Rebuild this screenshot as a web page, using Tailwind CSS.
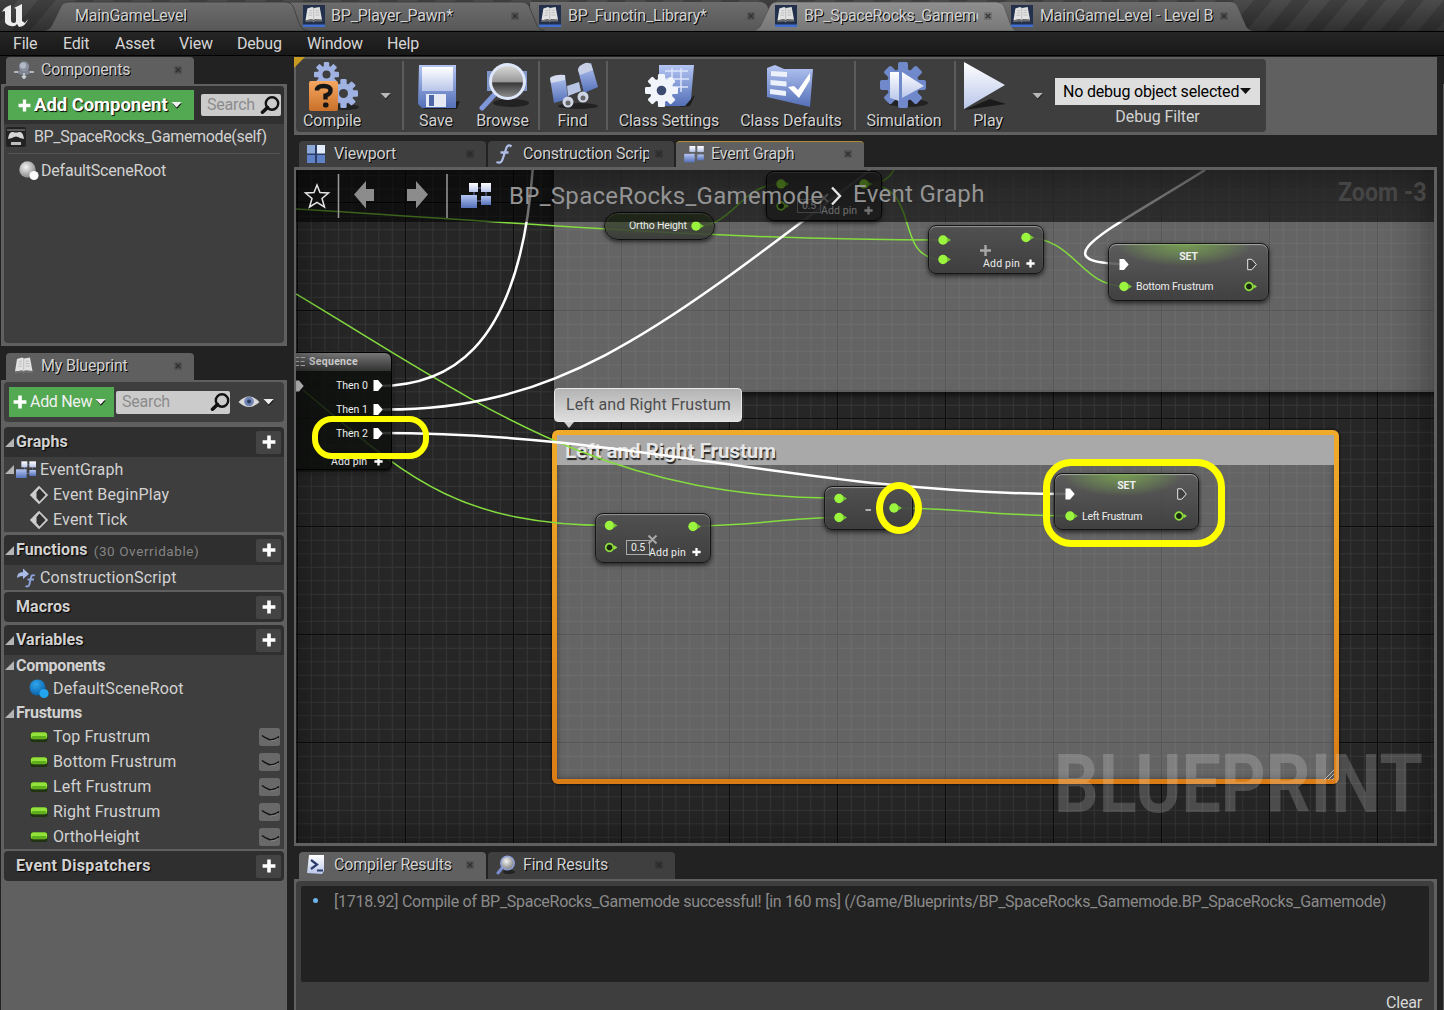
<!DOCTYPE html>
<html lang="en">
<head>
<meta charset="utf-8">
<title>Blueprint Editor</title>
<script src="https://cdn.jsdelivr.net/npm/@tailwindcss/browser@4"></script>
</head>
<body class="bg-[#222222]">
<svg class="absolute w-0 h-0">
  <defs>
    <linearGradient id="blue" x1="0" y1="0" x2="0" y2="1"><stop offset="0" stop-color="#b4c5f2"/><stop offset="1" stop-color="#5470b8"/></linearGradient>
    <linearGradient id="pale" x1="0" y1="0" x2="0" y2="1"><stop offset="0" stop-color="#ffffff"/><stop offset="1" stop-color="#b9c6ea"/></linearGradient>
    <linearGradient id="orange" x1="0" y1="0" x2="0" y2="1"><stop offset="0" stop-color="#f5a760"/><stop offset="1" stop-color="#c9702a"/></linearGradient>
    <radialGradient id="ball" cx=".4" cy=".35" r=".65"><stop offset="0" stop-color="#f4f4f4"/><stop offset="1" stop-color="#8a8a8a"/></radialGradient>
    <radialGradient id="blueball" cx=".4" cy=".3" r=".7"><stop offset="0" stop-color="#2fa6ee"/><stop offset="1" stop-color="#0a62a8"/></radialGradient>
    <linearGradient id="lens" x1="0" y1="0" x2="0" y2="1"><stop offset="0" stop-color="#d8d8d8"/><stop offset=".5" stop-color="#9a9a9a"/><stop offset=".55" stop-color="#3a3a3a"/><stop offset="1" stop-color="#8c8c8c"/></linearGradient>
    <linearGradient id="tab" x1="0" y1="0" x2="0" y2="1"><stop offset="0" stop-color="#6d6d6d"/><stop offset="1" stop-color="#575757"/></linearGradient>
    <linearGradient id="tabOn" x1="0" y1="0" x2="0" y2="1"><stop offset="0" stop-color="#8f8f8f"/><stop offset="1" stop-color="#787878"/></linearGradient>
    <pattern id="stripes" width="38" height="40" patternUnits="userSpaceOnUse" patternTransform="skewX(-40)"><rect width="18" height="40" fill="#000" opacity=".16"/></pattern>
    <linearGradient id="bar" x1="0" y1="0" x2="0" y2="1"><stop offset="0" stop-color="#4b4b4b"/><stop offset="1" stop-color="#303030"/></linearGradient>
  </defs>
  <symbol id="book" viewBox="0 0 20 18"><path d="M3 2 L8 0.5 L10 1.5 L16 0.5 L18.500 14 L11 13.500 L9.500 14.500 L8 13.500 L1 14.500Z" fill="#e2e2e2"/><path d="M1 14.500 L8 13.500 L9.500 14.800 L11 13.500 L18.500 14 L18.800 16 L11 15.800 L9.500 17 L8 15.800 L0.800 16.500Z" fill="#6f6f6f"/><path d="M9.700 1.500V14M5 4.500l3-.5M4.600 7l3.400-.5M4.200 9.500l3.800-.5M11.500 4l3.500.2M11.500 6.500l4 .2M11.500 9l4.400.2" stroke="#b4b4b4" stroke-width=".8" fill="none"/></symbol>
  <symbol id="bookbox" viewBox="0 0 22 22"><rect width="22" height="22" fill="#23304c"/><rect y="19.500" width="22" height="2.500" fill="#3f6fd0"/><use href="#book" x="1.500" y="1.500" width="19" height="17"/></symbol>
  <symbol id="x" viewBox="0 0 8 8"><rect width="8" height="8" rx="1" fill="#000" opacity=".13"/><path d="M1.700 1.700L6.300 6.300M6.300 1.700L1.700 6.300" stroke="#262626" stroke-width="1.500" opacity=".75"/></symbol>
  <symbol id="mag" viewBox="0 0 20 18"><circle cx="12" cy="7.500" r="6.200" fill="none" stroke="#111" stroke-width="2.400"/><path d="M7.500 11.500L2.500 16.200" stroke="#111" stroke-width="3.600" stroke-linecap="round"/></symbol>
  <symbol id="down" viewBox="0 0 12 8"><path d="M1.500 2.500L6 7.800L10.800 2.500" fill="#111"/><path d="M.5 1H10.700L5.600 6.600Z" fill="#eee"/></symbol>
  <symbol id="downGrey" viewBox="0 0 12 8"><path d="M1.500 2.500L6 7.800L10.800 2.500" fill="#222"/><path d="M.5 1H10.700L5.600 6.600Z" fill="#b8b8b8"/></symbol>
  <symbol id="plus" viewBox="0 0 14 14"><path d="M5.200 .6h3.600v4.600h4.600v3.600H8.800v4.600H5.200V8.800H.6V5.200h4.600z" fill="#fff"/></symbol>
  <symbol id="tri" viewBox="0 0 9 9"><path d="M9 0V9H0Z" fill="#b4b4b4"/></symbol>
  <symbol id="graph" viewBox="0 0 30 26"><path d="M13 5H25V18H6M13 5v13" fill="none" stroke="#6a7ba8" stroke-width="1"/><rect x="8" y="0" width="9" height="9" fill="url(#pale)"/><rect x="20" y="0" width="10" height="9" fill="url(#pale)"/><rect x="0" y="12" width="16" height="13" fill="url(#blue)"/><rect x="20" y="13" width="10" height="9" fill="url(#blue)"/></symbol>
  <symbol id="event" viewBox="0 0 20 20"><path d="M10 .8L19.200 10L10 19.200L.8 10Z" fill="#cdcdcd"/><path d="M7.500 7L10.500 3.600L16.600 10L10.500 16.400L7.500 13Z" fill="#303030"/></symbol>
  <symbol id="pill" viewBox="0 0 18 12"><rect x=".3" y="1" width="17.400" height="10" rx="3" fill="#1f3310"/><rect x=".8" y="1.300" width="16.400" height="7" rx="2.500" fill="#93e23c"/><rect x="1.500" y="5" width="15" height="3" rx="1.500" fill="#5fae1c"/></symbol>
  <symbol id="closedeye" viewBox="0 0 21 18"><rect width="21" height="18" rx="2.500" fill="#696969"/><path d="M3 7.500Q6 10 11.500 12Q17 11.500 20 8.500" fill="none" stroke="#111" stroke-width="1.400"/><path d="M11 13Q17 12.700 19 10.300" fill="none" stroke="#999" stroke-width=".7"/></symbol>
  <symbol id="gear" viewBox="-12 -12 24 24"><circle r="8.500"/><rect x="-2.600" y="-12" width="5.200" height="24" rx="1"/><rect x="-2.600" y="-12" width="5.200" height="24" rx="1" transform="rotate(45)"/><rect x="-2.600" y="-12" width="5.200" height="24" rx="1" transform="rotate(90)"/><rect x="-2.600" y="-12" width="5.200" height="24" rx="1" transform="rotate(135)"/></symbol>
  <symbol id="pin" viewBox="0 0 14 10" overflow="visible"><circle cx="5" cy="5" r="4.700" fill="#9bf53f"/><path d="M9 2.500L13 5L9 7.500Z" fill="#78c832"/></symbol>
  <symbol id="pinO" viewBox="0 0 14 10" overflow="visible"><circle cx="5" cy="5" r="3.800" fill="#1c2a12" stroke="#8fe03c" stroke-width="1.700"/><path d="M9.500 2.800L13 5L9.500 7.200Z" fill="#8fe03c"/></symbol>
  <symbol id="exec" viewBox="0 0 10 12" overflow="visible"><path d="M.5 .5H5L9.700 6L5 11.500H.5Z" fill="#fff"/></symbol>
  <symbol id="execO" viewBox="0 0 10 12" overflow="visible"><path d="M.7 .8H4.800L9.300 6L4.800 11.200H.7Z" fill="#222" fill-opacity=".4" stroke="#e8e8e8" stroke-width="1"/></symbol>
</svg>

<div class="relative w-[1444px] h-[1010px] overflow-hidden bg-[#222222] flex flex-col font-[Roboto,sans-serif] text-[16px] leading-5 tracking-[-0.2px] text-[#d2d2d2] whitespace-nowrap">

  <!-- Window tabs -->
  <header class="relative h-[31px] shrink-0 flex items-center text-shadow-[1px_1px_0_#000]">
    <svg class="absolute inset-0" width="1444" height="31">
      <rect width="1444" height="31" fill="url(#bar)"/><rect width="1444" height="31" fill="url(#stripes)"/>
      <path d="M1005 31L1000 2H1230Q1236 2 1238 8L1245 24Q1247 30 1253 31Z" fill="url(#tab)"/>
      <path d="M530 31V2H760Q766 2 768 8L778 31Z" fill="url(#tab)"/>
      <path d="M290 31V2H522Q527 2 529 6L536 23Q538 30 545 31Z" fill="url(#tab)" stroke="#3a3a3a" stroke-width=".8"/>
      <path d="M45 31Q51 29 53 23L61 6Q63 2 68 2H285Q291 2 293 6L299 23Q301 30 308 31Z" fill="url(#tab)" stroke="#3a3a3a" stroke-width=".8"/>
      <path d="M753 31Q760 29 762 23L770 6Q772 2 777 2H996Q1002 2 1004 6L1010 23Q1012 30 1018 31Z" fill="url(#tabOn)" stroke="#4a4a4a" stroke-width=".6"/>
      <path d="M2 12Q4 7 11 5V20Q11 23 14 23Q16 23 16 21V9Q15 8 14 8Q18 6 22 4V21L25 23L28 19Q26 26 19 27L17 24Q15 27 11 26Q6 25 5 22V12Q5 10 2 12Z" fill="#eee"/>
    </svg>
    <div class="relative w-[225px] ml-[75px]">MainGameLevel</div>
    <div class="relative w-[236px] flex items-center"><svg class="ml-[3px] w-[22px] h-[22px]"><use href="#bookbox"/></svg><span class="ml-[6px] w-[180px]">BP_Player_Pawn*</span><svg class="w-2 h-2"><use href="#x"/></svg></div>
    <div class="relative w-[237px] flex items-center"><svg class="ml-[3px] w-[22px] h-[22px]"><use href="#bookbox"/></svg><span class="ml-[7px] w-[179px]">BP_Functin_Library*</span><svg class="w-2 h-2"><use href="#x"/></svg></div>
    <div class="relative w-[235px] flex items-center"><svg class="ml-[2px] w-[22px] h-[22px]"><use href="#bookbox"/></svg><span class="ml-[7px] w-[174px] mr-[6px] overflow-hidden tracking-[-0.35px]">BP_SpaceRocks_Gamemode</span><svg class="w-2 h-2"><use href="#x"/></svg></div>
    <div class="relative w-[237px] flex items-center"><svg class="ml-[3px] w-[22px] h-[22px]"><use href="#bookbox"/></svg><span class="ml-[7px] w-[174px] mr-[6px] overflow-hidden">MainGameLevel - Level Blueprint</span><svg class="w-2 h-2"><use href="#x"/></svg></div>
  </header>

  <!-- Menu -->
  <nav class="h-[25px] shrink-0 border-y border-black bg-linear-to-b from-[#262626] to-[#181818] flex items-center pl-[13px] text-[#d6d6d6]">
    <span class="w-[50px]">File</span><span class="w-[52px]">Edit</span><span class="w-[64px]">Asset</span><span class="w-[58px]">View</span><span class="w-[70px]">Debug</span><span class="w-[80px]">Window</span><span>Help</span>
  </nav>

  <div class="flex flex-1 min-h-0">
    <!-- Left column -->
    <aside class="w-[287px] pl-px pt-px shrink-0 flex flex-col">
      <div class="ml-[5px] w-[188px] h-[27px] pb-0.5 shrink-0 rounded-t-sm bg-[#5f5f5f] flex items-center text-shadow-[1px_1px_0_#000]">
        <svg class="ml-2 w-[20px] h-[18px]" viewBox="0 0 20 18"><path d="M1 11L10 7.500L19 11L10 15Z" fill="#7d8490"/><circle cx="10" cy="5.500" r="5" fill="#8b93a2"/><circle cx="9" cy="4.500" r="3" fill="#b3bac6"/><path d="M0 11h4M16 11h4M10 12v5M8 15l2 2.500L12 15" stroke="#c9cdd5" stroke-width="1.600"/></svg>
        <span class="ml-[7px] w-[133px]">Components</span><svg class="w-2 h-2"><use href="#x"/></svg>
      </div>
      <section class="h-[262px] shrink-0 bg-[#606060] pt-[2px] px-[3px] pb-[3px]">
        <div class="h-full rounded bg-[#3e3e3e] overflow-hidden">
          <div class="h-[38px] bg-[#303030] flex items-center pl-1">
            <button class="w-[186px] h-[30px] bg-[#53a951] flex items-center text-white font-bold text-[18.500px] tracking-[-0.05px] text-shadow-[1px_1px_1px_#000]">
              <svg class="ml-[10px] w-[13px] h-[13px]"><use href="#plus"/></svg><span class="ml-[3px] w-[137px] text-left">Add Component</span><svg class="w-[12px] h-[8px]"><use href="#down"/></svg>
            </button>
            <div class="ml-[7px] w-[80px] h-[22px] rounded-xs bg-[#cbcbcb] text-[#8b8b8b] flex items-center"><span class="ml-[6px] w-[53px]">Search</span><svg class="w-[20px] h-[18px]"><use href="#mag"/></svg></div>
          </div>
          <div class="h-[25px] flex items-center pl-[2px]">
            <svg class="w-[20px] h-[20px]" viewBox="0 0 20 20"><rect width="20" height="20" rx="2" fill="#222"/><path d="M1 3H19" stroke="#8f8f8f"/><path d="M2 12Q3 4 7 5Q10 6 13 5Q17 4 18 12L14 11Q10 8 6 11Z" fill="#d6d6d6"/><path d="M5 15h10v3H5z" fill="#bdbdbd"/></svg>
            <span class="ml-[8px] tracking-[-0.35px]">BP_SpaceRocks_Gamemode(self)</span>
          </div>
          <div class="mx-1 mt-1 h-px bg-[#555]"></div>
          <div class="h-[33px] flex items-center pl-[15px]"><svg class="w-[20px] h-[20px]" viewBox="0 0 20 20"><circle cx="8.500" cy="8.500" r="8.200" fill="url(#ball)"/><circle cx="15" cy="14.500" r="4.600" fill="#fafafa"/></svg><span class="ml-[2px]">DefaultSceneRoot</span></div>
        </div>
      </section>

      <div class="mt-[7px] ml-[5px] w-[188px] h-[27px] pb-0.5 shrink-0 rounded-t-sm bg-[#5f5f5f] flex items-center text-shadow-[1px_1px_0_#000]">
        <svg class="ml-2 w-[20px] h-[18px]"><use href="#book"/></svg><span class="ml-[7px] w-[133px]">My Blueprint</span><svg class="w-2 h-2"><use href="#x"/></svg>
      </div>
      <section class="flex-1 bg-[#606060] pt-[2px] px-[3px] flex flex-col">
        <div class="h-[40px] rounded bg-[#3e3e3e] flex items-center pl-[5px]">
          <button class="w-[105px] h-[30px] bg-[#53a951] flex items-center text-[#f0f0f0] tracking-[-0.3px]"><svg class="ml-1 w-[14px] h-[14px]"><use href="#plus"/></svg><span class="ml-[3px] w-[65px] text-left">Add New</span><svg class="w-[12px] h-[8px]"><use href="#down"/></svg></button>
          <div class="ml-[2px] w-[114px] h-[23px] rounded-xs bg-[#cbcbcb] text-[#8b8b8b] flex items-center"><span class="ml-[6px] w-[88px]">Search</span><svg class="w-[20px] h-[18px]"><use href="#mag"/></svg></div>
          <svg class="ml-2 w-[22px] h-[14px]" viewBox="0 0 22 14"><path d="M.5 7Q11-4 21.500 7Q11 17 .5 7Z" fill="#dadada"/><circle cx="11" cy="6.500" r="4.800" fill="#7186b5"/><circle cx="11" cy="6.500" r="2" fill="#2e3c60"/></svg>
          <svg class="ml-[3px] w-[12px] h-[8px]"><use href="#down"/></svg>
        </div>

        <h2 class="mt-[5px] h-[30px] rounded-t bg-[#2f2f2f] flex items-center pl-px font-bold tracking-[0.1px] text-shadow-[1px_1px_1px_#000]"><svg class="w-[9px] h-[9px]"><use href="#tri"/></svg><span class="ml-[2px] flex-1">Graphs</span><span class="w-[25px] h-[23px] rounded-xs bg-[#444] mr-[3px] grid place-items-center"><svg class="w-[14px] h-[14px]"><use href="#plus"/></svg></span></h2>
        <div class="h-[75px] bg-[#3e3e3e] tracking-[0.2px]">
          <div class="h-[25px] flex items-center pl-px"><svg class="w-[9px] h-[9px]"><use href="#tri"/></svg><svg class="ml-[2px] w-[20px] h-[18px]"><use href="#graph"/></svg><span class="ml-1">EventGraph</span></div>
          <div class="h-[25px] flex items-center pl-[25px]"><svg class="w-[20px] h-[20px]"><use href="#event"/></svg><span class="ml-1">Event BeginPlay</span></div>
          <div class="h-[25px] flex items-center pl-[25px]"><svg class="w-[20px] h-[20px]"><use href="#event"/></svg><span class="ml-1">Event Tick</span></div>
        </div>
        <h2 class="mt-[3px] h-[30px] rounded-t bg-[#2f2f2f] flex items-center pl-px font-bold tracking-[0.1px] text-shadow-[1px_1px_1px_#000]"><svg class="w-[9px] h-[9px]"><use href="#tri"/></svg><span class="ml-[2px]">Functions</span><span class="ml-[6px] mt-0.5 flex-1 font-normal text-[13.500px] tracking-[0.6px] text-[#848484] text-shadow-none">(30 Overridable)</span><span class="w-[25px] h-[23px] rounded-xs bg-[#444] mr-[3px] grid place-items-center"><svg class="w-[14px] h-[14px]"><use href="#plus"/></svg></span></h2>
        <div class="h-[25px] bg-[#3e3e3e] flex items-center pl-[12px] tracking-[0.2px]"><svg class="w-[20px] h-[20px]" viewBox="0 0 20 20"><path d="M1 10Q1 4 7 4V0.500L13 6L7 11V8Q3 8 1 10Z" fill="#a9bbe6"/><path d="M19 7.500Q15.500 6 14.800 10L13.500 16Q12.800 19.500 9.500 18M11.500 11.500H18" fill="none" stroke="#8ba1d6" stroke-width="1.900"/></svg><span class="ml-1">ConstructionScript</span></div>
        <h2 class="mt-[2px] h-[30px] rounded bg-[#2f2f2f] flex items-center pl-[12px] font-bold tracking-[0.1px] text-shadow-[1px_1px_1px_#000]"><span class="flex-1">Macros</span><span class="w-[25px] h-[23px] rounded-xs bg-[#444] mr-[3px] grid place-items-center"><svg class="w-[14px] h-[14px]"><use href="#plus"/></svg></span></h2>
        <h2 class="mt-[3px] h-[30px] rounded-t bg-[#2f2f2f] flex items-center pl-px font-bold text-shadow-[1px_1px_1px_#000]"><svg class="w-[9px] h-[9px]"><use href="#tri"/></svg><span class="ml-[2px] flex-1 tracking-[0]">Variables</span><span class="w-[25px] h-[23px] rounded-xs bg-[#444] mr-[3px] grid place-items-center"><svg class="w-[14px] h-[14px]"><use href="#plus"/></svg></span></h2>
        <div class="h-[194px] bg-[#3e3e3e] tracking-[0.15px]">
          <div class="h-[21px] flex items-center pl-px font-bold tracking-[-0.25px]"><svg class="w-[9px] h-[9px]"><use href="#tri"/></svg><span class="ml-[2px]">Components</span></div>
          <div class="h-[26px] flex items-center pl-[25px]"><svg class="w-[20px] h-[20px]" viewBox="0 0 20 20"><circle cx="8.500" cy="8.500" r="8" fill="url(#blueball)"/><circle cx="15" cy="14.500" r="4.600" fill="#22a4ee"/></svg><span class="ml-1">DefaultSceneRoot</span></div>
          <div class="h-[22px] flex items-center pl-px font-bold tracking-[-0.25px]"><svg class="w-[9px] h-[9px]"><use href="#tri"/></svg><span class="ml-[2px]">Frustums</span></div>
          <div class="h-[25px] flex items-center pl-[26px] pr-1"><svg class="w-[18px] h-[12px]"><use href="#pill"/></svg><span class="ml-[5px] flex-1">Top Frustrum</span><svg class="w-[21px] h-[18px]"><use href="#closedeye"/></svg></div>
          <div class="h-[25px] flex items-center pl-[26px] pr-1"><svg class="w-[18px] h-[12px]"><use href="#pill"/></svg><span class="ml-[5px] flex-1">Bottom Frustrum</span><svg class="w-[21px] h-[18px]"><use href="#closedeye"/></svg></div>
          <div class="h-[25px] flex items-center pl-[26px] pr-1"><svg class="w-[18px] h-[12px]"><use href="#pill"/></svg><span class="ml-[5px] flex-1">Left Frustrum</span><svg class="w-[21px] h-[18px]"><use href="#closedeye"/></svg></div>
          <div class="h-[25px] flex items-center pl-[26px] pr-1"><svg class="w-[18px] h-[12px]"><use href="#pill"/></svg><span class="ml-[5px] flex-1">Right Frustrum</span><svg class="w-[21px] h-[18px]"><use href="#closedeye"/></svg></div>
          <div class="h-[25px] flex items-center pl-[26px] pr-1"><svg class="w-[18px] h-[12px]"><use href="#pill"/></svg><span class="ml-[5px] flex-1 tracking-[0]">OrthoHeight</span><svg class="w-[21px] h-[18px]"><use href="#closedeye"/></svg></div>
        </div>
        <h2 class="mt-[2px] h-[30px] rounded bg-[#2f2f2f] flex items-center pl-[12px] font-bold tracking-[0.3px] text-shadow-[1px_1px_1px_#000]"><span class="flex-1">Event Dispatchers</span><span class="w-[25px] h-[23px] rounded-xs bg-[#444] mr-[3px] grid place-items-center"><svg class="w-[14px] h-[14px]"><use href="#plus"/></svg></span></h2>
      </section>
    </aside>

    <!-- Main column -->
    <main class="ml-[7px] w-[1143px] pt-px shrink-0 flex flex-col">
      <div class="relative h-[78px] shrink-0 bg-[#606060] pt-[2px] pl-[2px]">
        <div class="w-[970px] h-[73px] rounded bg-[#3e3e3e] flex tracking-[-0.1px] text-shadow-[1px_1px_0_#000]">
          <div class="w-[72px] flex flex-col items-center pt-[2px]">
            <svg class="w-[60px] h-[50px]" viewBox="302 61 60 50"><ellipse cx="345" cy="107" rx="14" ry="3" fill="#222"/><g fill="#9fb2e2"><use href="#gear" x="314" y="62" width="25" height="25"/><use href="#gear" x="329" y="79" width="29" height="29"/></g><circle cx="326.500" cy="74.500" r="4" fill="#3e3e3e"/><circle cx="343.500" cy="93.500" r="4.500" fill="#3e3e3e"/><rect x="309" y="81" width="29" height="30" rx="2" fill="url(#orange)"/><path d="M317 90.500Q317 86 323.500 86Q330.500 86 330.500 90.500Q330.500 94 325.500 95.500V99.500" fill="none" stroke="#161616" stroke-width="4.400"/><rect x="323" y="102.500" width="5.500" height="5" rx="2" fill="#161616"/></svg>
            <span>Compile</span>
          </div>
          <div class="w-[34px] pt-[33px] pl-[12px]"><svg class="w-[12px] h-[8px]"><use href="#downGrey"/></svg></div>
          <div class="w-[2px] my-[2px] bg-[#5c5c5c]"></div>
          <div class="w-[64px] flex flex-col items-center pt-[2px]">
            <svg class="w-[50px] h-[50px]" viewBox="411 61 50 50"><path d="M420 106L460 101L457 109H424Z" fill="#1d1d1d"/><path d="M419 65H456V108H422L418 104Z" fill="url(#blue)"/><rect x="422" y="67" width="31" height="24" fill="url(#pale)"/><path d="M426 94h20v13h-20z" fill="#e6eaf5"/><path d="M429 95h5v11h-5z" fill="#5068a8"/></svg>
            <span>Save</span>
          </div>
          <div class="w-[70px] pr-px flex flex-col items-center pt-[2px]">
            <svg class="w-[56px] h-[50px]" viewBox="474 61 56 50"><ellipse cx="510" cy="103" rx="18" ry="4" fill="#222"/><path d="M493 95L481 108" stroke="#7f97d8" stroke-width="5" stroke-linecap="round"/><path d="M486 71h40v20h-40z" fill="#8196c8"/><circle cx="506.500" cy="81.500" r="18.500" fill="#dfe7fa"/><circle cx="506.500" cy="81.500" r="15.500" fill="url(#lens)"/></svg>
            <span>Browse</span>
          </div>
          <div class="w-[2px] my-[2px] bg-[#5c5c5c]"></div>
          <div class="w-[66px] pr-px flex flex-col items-center pt-[2px]">
            <svg class="w-[54px] h-[50px]" viewBox="545 61 54 50"><ellipse cx="577" cy="106" rx="20" ry="3" fill="#222"/><path d="M577 70L590 63L597 87L583 93Z" fill="url(#blue)"/><path d="M577 70Q577 66 582 64Q588 61 590 65L592 70L579 75Z" fill="#c7cfe5"/><path d="M549 78L564 75L567 99L553 103Z" fill="url(#blue)"/><path d="M549 78Q554 74 564 75V80L550 83Z" fill="#d4dbee"/><path d="M566 86L578 82L580 91L567 96Z" fill="#b9c5e4"/><circle cx="567" cy="102" r="5.500" fill="#cfd5e5"/><circle cx="582" cy="97" r="5.500" fill="#cfd5e5"/><circle cx="567" cy="103" r="2.500" fill="#666"/><circle cx="582" cy="98" r="2.500" fill="#666"/></svg>
            <span>Find</span>
          </div>
          <div class="w-[2px] my-[2px] bg-[#5c5c5c]"></div>
          <div class="w-[122px] flex flex-col items-center pt-[2px]">
            <svg class="w-[60px] h-[50px]" viewBox="639 61 60 50"><path d="M680 107L695 95L690 106Z" fill="#1d1d1d"/><path d="M659 65H694L691 99L685 106H659Z" fill="url(#blue)"/><path d="M665 71h23M664 79h25M664 87h24M672 68v24M681 68v24" stroke="#dce5fb" stroke-width="1.500"/><g fill="#f1f4fb"><use href="#gear" x="645" y="74" width="33" height="33"/></g><circle cx="661.500" cy="90.500" r="4.800" fill="#3c4a70"/></svg>
            <span>Class Settings</span>
          </div>
          <div class="w-[124px] pr-[2px] flex flex-col items-center pt-[2px]">
            <svg class="w-[60px] h-[50px]" viewBox="762 61 60 50"><path d="M768 68L776 65L785 69H814L811 107L768 97Z" fill="url(#blue)"/><path d="M772 71l16 1v5l-16-1zM771.500 80l16 1.500v5l-16-1.500zM771 89l16 2v5l-16-2z" fill="#edf1fb"/><path d="M789 87L795 86L799 90L811 73L811 80L800 98Z" fill="#fff"/></svg>
            <span>Class Defaults</span>
          </div>
          <div class="w-[2px] my-[2px] bg-[#5c5c5c]"></div>
          <div class="w-[98px] pr-[2px] flex flex-col items-center pt-[2px]">
            <svg class="w-[60px] h-[50px]" viewBox="874 61 60 50"><ellipse cx="908" cy="103" rx="20" ry="4" fill="#222"/><g fill="#7089ca"><use href="#gear" x="880" y="62" width="46" height="46"/></g><path d="M890 72h9v29l-9-3z" fill="url(#pale)"/><path d="M902 72L924 86L902 98Z" fill="url(#pale)"/></svg>
            <span>Simulation</span>
          </div>
          <div class="w-[2px] my-[2px] bg-[#5c5c5c]"></div>
          <div class="w-[64px] flex flex-col items-center pt-[2px]">
            <svg class="w-[60px] h-[50px]" viewBox="958 61 60 50"><path d="M964 110L1006 104L990 99Z" fill="#1a1a1a"/><path d="M964 62L1005 85L964 109Z" fill="url(#pale)"/></svg>
            <span>Play</span>
          </div>
          <div class="w-[35px] pt-[33px] pl-[12px]"><svg class="w-[12px] h-[8px]"><use href="#downGrey"/></svg></div>
          <div class="w-[205px] pt-[19px] flex flex-col text-shadow-none">
            <div class="h-[27px] bg-[#dedede] text-black flex items-center pl-2"><span class="w-[177px] tracking-[-0.2px]">No debug object selected</span><svg class="w-[11px] h-[7px]" viewBox="0 0 11 7"><path d="M0 0H11L5.500 6Z" fill="#111"/></svg></div>
            <span class="mt-[2px] text-center">Debug Filter</span>
          </div>
        </div>
        <div class="absolute left-0 top-0 w-[11px] h-[11px] bg-[#c99a22] [clip-path:polygon(0_0,100%_0,0_100%)]"></div>
      </div>

      <!-- Document tabs -->
      <div class="mt-[6px] h-[26px] shrink-0 flex gap-[2px] pl-[5px] text-shadow-[1px_1px_0_#000]">
        <div class="w-[187px] rounded-t-sm bg-[#3f3f3f] flex items-center"><svg class="ml-2 w-[18px] h-[18px]" viewBox="0 0 18 18"><rect width="18" height="18" fill="#2b3d66"/><rect width="8" height="8.500" fill="#8da9d8"/><rect x="10" width="8" height="8.500" fill="#e3ecfa"/><rect y="10" width="8" height="8" fill="#5f82c6"/><rect x="10" y="10" width="8" height="8" fill="#5f82c6"/></svg><span class="ml-[9px] w-[132px]">Viewport</span><svg class="w-2 h-2"><use href="#x"/></svg></div>
        <div class="w-[186px] rounded-t-sm bg-[#3f3f3f] flex items-center"><svg class="ml-[7px] w-[18px] h-[20px]" viewBox="0 0 18 20"><path d="M16.500 2.500Q12.500-.5 11 5L7.500 15.500Q6 20 1.500 18M5.500 8.500H13.500" fill="none" stroke="#aebde8" stroke-width="2.300"/></svg><span class="ml-[10px] w-[126px] mr-[6px] overflow-hidden">Construction Script</span><svg class="w-2 h-2"><use href="#x"/></svg></div>
        <div class="w-[188px] rounded-t-sm bg-[#606060] border-t border-[#b08d35] pb-px flex items-center"><svg class="ml-[8px] w-[20px] h-[17px]"><use href="#graph"/></svg><span class="ml-[7px] w-[133px]">Event Graph</span><svg class="w-2 h-2"><use href="#x"/></svg></div>
      </div>

      <!-- Graph panel -->
      <div class="h-[679px] shrink-0 border-t-[3px] border-r-[3px] border-b-[3px] border-l-2 border-[#606060]">
        <div class="relative w-full h-full overflow-hidden bg-[#262626]">
          <!-- The canvas plane is shifted so nodes sit in window coordinates -->
          <div class="absolute -left-[296px] -top-[170px] w-[1444px] h-[1010px]">
            <svg class="absolute inset-0" width="1444" height="1010">
              <defs>
                <pattern id="minor" x="405.300" y="310.300" width="13.500" height="13.500" patternUnits="userSpaceOnUse"><path d="M.5 0V13.500M0 .5H13.500" stroke="#fff" stroke-opacity=".075"/></pattern>
                <pattern id="major" x="405" y="310" width="108" height="108" patternUnits="userSpaceOnUse"><path d="M.5 0V108M0 .5H108" stroke="#0c0c0c"/></pattern>
              </defs>
              <rect x="296" y="170" width="1138" height="673" fill="url(#minor)"/>
              <rect x="296" y="170" width="1138" height="673" fill="url(#major)"/>
            </svg>
            <div class="absolute left-[554px] top-[160px] w-[900px] h-[232px] bg-[#a9a9a9]/48 border-b-2 border-[#555]/60 shadow-[0_3px_6px_#000a]"></div>
            <div class="absolute left-[552px] top-[430px] w-[787px] h-[354px] rounded-md bg-linear-to-b from-[#f0ab2a] to-[#d97c16] shadow-[0_0_3px_#000] [clip-path:polygon(evenodd,-5px_-5px,792px_-5px,792px_359px,-5px_359px,-5px_-5px,5px_5px,5px_349px,782px_349px,782px_5px,5px_5px)]"></div>
            <div class="absolute left-[557px] top-[435px] w-[777px] h-[344px] bg-[#a9a9a9]/48 shadow-[inset_0_0_5px_#0006]">
              <div class="h-[30px] bg-[#acacac]/96 pl-2 pt-[4px] text-[20.500px] leading-6 tracking-[0] font-bold text-[#e6e6e6] text-shadow-[1px_2px_1px_#222]">Left and Right Frustum</div>
            </div>
            <svg class="absolute inset-0" width="1444" height="1010">
              <path d="M1324 780L1334 770M1328 780L1334 774M1332 780L1334 778" stroke="#bbb" fill="none"/>
              <g fill="none" stroke="#84dc3e" stroke-width="1.500">
                <path d="M296 294C480 404 600 498 839 498"/><path d="M303 390C400 470 450 525 610 525.500"/><path d="M296 209C500 221 700 240 943 240"/><path d="M696 226C735 226 740 184 781 184"/><path d="M864 184C925 184 890 259 943 259.500"/><path d="M864 184Q886 186 895 168"/><path d="M1026 237.500C1075 238 1080 286 1124 286"/><path d="M693 526C750 526 790 517.500 839 517.500"/><path d="M894 508C960 508 1000 516 1070 516"/>
              </g>
              <g fill="none" stroke="#fff" stroke-width="2.500">
                <path d="M378 386C440 386 520 360 533 165"/><path d="M378 409.500C560 412 660 330 870 170"/><path d="M378 433C640 433 800 493 1066 494"/><path d="M1205 170C1110 230 1037 262 1124 264"/>
              </g>
            </svg>

            <!-- Nodes -->
            <div class="text-[10.500px] leading-3 tracking-[-0.15px] text-[#ededed]">
              <div class="absolute left-[280px] top-[352px] w-[112px] h-[118px] rounded-md bg-[#0e110e]/85 border border-black shadow-[0_2px_4px_#000a]">
                <div class="h-[18px] rounded-t-md bg-linear-to-b from-[#777] to-[#333] pl-[28px] pt-[3px] font-bold text-[#cfcfcf] tracking-[0.3px]">Sequence</div>
                <div class="pl-[55px] pt-[9px] flex flex-col gap-3 tracking-[0]"><span>Then 0</span><span>Then 1</span><span>Then 2</span></div>
                <div class="pl-[50px] pt-4 tracking-[0.1px]">Add pin</div>
              </div>
              <div class="absolute left-[604px] top-[212px] w-[111px] h-[28px] rounded-full border border-[#111] bg-linear-to-b from-[#44562f]/90 to-[#363636]/85 shadow-[inset_0_1px_1px_#fff5,0_2px_4px_#0009] pl-[24px] pt-[7px]">Ortho Height</div>
              <div class="absolute left-[766px] top-[171px] w-[116px] h-[50px] rounded-lg border border-[#0a0a0a] bg-[#3c3c3c]/85 shadow-[inset_0_1px_1px_#fff5,0_2px_4px_#0009]">
                <div class="absolute left-[30px] top-[27px] w-[24px] h-[14px] border border-[#999] text-center leading-3">0.5</div>
                <div class="absolute left-[54px] top-[33px] tracking-[0.1px]">Add pin</div><svg class="absolute left-[52px] top-[21px] w-[10px] h-[10px]" viewBox="0 0 10 10"><path d="M1 1l8 8M9 1l-8 8" stroke="#a8a8a8" stroke-width="2"/></svg>
              </div>
              <div class="absolute left-[928px] top-[225px] w-[116px] h-[49px] rounded-lg border border-[#161616] bg-linear-to-b from-[#4e4e4e]/90 to-[#3a3a3a]/90 shadow-[inset_0_1px_1px_#fff6,0_2px_5px_#000a]"><div class="absolute left-[54px] top-[32px] tracking-[0.2px]">Add pin</div></div>
              <div class="absolute left-[1108px] top-[243px] w-[161px] h-[58px] rounded-lg border border-[#161616] bg-linear-to-b from-[#5a5a5a]/85 to-[#3a3a3a]/85 shadow-[inset_0_1px_1px_#fff7,0_2px_5px_#000a] overflow-hidden">
                <div class="absolute left-2 right-4 top-0 h-[22px] bg-[radial-gradient(ellipse_at_50%_0%,#7cae4fcc,#7cae4f55_45%,transparent_72%)]"></div>
                <div class="absolute inset-x-0 top-[7px] text-center font-bold">SET</div><div class="absolute left-[27px] top-[37px]">Bottom Frustrum</div>
              </div>
              <div class="absolute left-[595px] top-[513px] w-[116px] h-[50px] rounded-lg border border-[#161616] bg-linear-to-b from-[#4e4e4e]/90 to-[#3a3a3a]/90 shadow-[inset_0_1px_1px_#fff6,0_2px_5px_#000a]">
                <div class="absolute left-[30px] top-[26px] w-[24px] h-[15px] border border-[#aaa] text-center leading-[13px]">0.5</div>
                <div class="absolute left-[53px] top-[33px] tracking-[0.2px]">Add pin</div>
              </div>
              <div class="absolute left-[824px] top-[486px] w-[89px] h-[44px] rounded-lg border border-[#161616] bg-linear-to-b from-[#4e4e4e]/90 to-[#3a3a3a]/90 shadow-[inset_0_1px_1px_#fff6,0_2px_5px_#000a]"></div>
              <div class="absolute left-[1054px] top-[473px] w-[145px] h-[57px] rounded-lg border border-[#161616] bg-linear-to-b from-[#5a5a5a]/85 to-[#3a3a3a]/85 shadow-[inset_0_1px_1px_#fff7,0_2px_5px_#000a] overflow-hidden">
                <div class="absolute left-2 right-4 top-0 h-[22px] bg-[radial-gradient(ellipse_at_50%_0%,#7cae4fcc,#7cae4f55_45%,transparent_72%)]"></div>
                <div class="absolute inset-x-0 top-[6px] text-center font-bold">SET</div><div class="absolute left-[27px] top-[37px] tracking-[-0.25px]">Left Frustrum</div>
              </div>
            </div>

            <!-- Pins -->
            <svg class="absolute inset-0" width="1444" height="1010">
              <g>
                <use href="#pin" x="776" y="179" width="14" height="10"/><use href="#pinO" x="776" y="201" width="14" height="10"/><use href="#pin" x="859" y="179" width="14" height="10"/>
                <use href="#pin" x="691" y="221" width="14" height="10"/>
                <use href="#pin" x="938" y="235" width="14" height="10"/><use href="#pin" x="938" y="254.500" width="14" height="10"/><use href="#pin" x="1021" y="232.500" width="14" height="10"/>
                <use href="#pin" x="1119" y="281.500" width="14" height="10"/><use href="#pinO" x="1244" y="281.500" width="14" height="10"/>
                <use href="#pin" x="604.500" y="520.500" width="14" height="10"/><use href="#pinO" x="604.500" y="542.500" width="14" height="10"/><use href="#pin" x="688" y="521.500" width="14" height="10"/>
                <use href="#pin" x="834" y="493.500" width="14" height="10"/><use href="#pin" x="834" y="512.500" width="14" height="10"/><use href="#pin" x="889" y="503" width="14" height="10"/>
                <use href="#pin" x="1065" y="511" width="14" height="10"/><use href="#pinO" x="1174" y="511" width="14" height="10"/>
                <use href="#exec" x="1119" y="258.500" width="10" height="12"/><use href="#execO" x="1247" y="258.500" width="10" height="12"/>
                <use href="#exec" x="1065" y="488" width="10" height="12"/><use href="#execO" x="1177" y="488" width="10" height="12"/>
                <use href="#exec" x="373" y="379.500" width="10" height="12"/><use href="#exec" x="373" y="403.500" width="10" height="12"/><use href="#exec" x="373" y="427.500" width="10" height="12"/><use href="#exec" x="294" y="380" width="10" height="12" opacity=".8"/>
              </g>
              <path d="M296 357.500h3m1.500 0h4.500M296 361.500h3m1.500 0h4M296 365.500h3m1.500 0h4.500" stroke="#bbb"/>
              <use href="#plus" x="374" y="457" width="9" height="9"/><use href="#plus" x="864" y="206" width="9" height="9"/><use href="#plus" x="1026" y="259" width="9" height="9"/><use href="#plus" x="692" y="547.500" width="9" height="9"/>
              <path d="M985.500 245v11M980 250.500h11" stroke="#a8a8a8" stroke-width="2.400"/><path d="M865.500 510h5.500" stroke="#b0b0b0" stroke-width="2"/><path d="M648.500 535.500l8 8M656.500 535.500l-8 8" stroke="#a8a8a8" stroke-width="2"/>
            </svg>

            <!-- Comment bubble -->
            <div class="absolute left-[554px] top-[388px] w-[188px] h-[34px] rounded-sm border border-[#e8e8e8] bg-linear-to-b from-[#b4b4b4] to-[#dedede] text-[#4d4d4d] tracking-[0.12px] pl-[11px] pt-[6px]">Left and Right Frustum</div>
            <div class="absolute left-[564px] top-[422px] w-[10px] h-[6px] bg-[#d0d0d0] [clip-path:polygon(0_0,100%_0,50%_100%)]"></div>

            <!-- Edge shading -->
            <div class="absolute left-[296px] top-[170px] w-[1138px] h-[673px] shadow-[inset_0_0_45px_#0007]"></div>

            <!-- Breadcrumb bar -->
            <div class="absolute left-[296px] top-[170px] w-[1138px] h-[52px] bg-black/55 flex items-center text-[#949494] text-[24px] tracking-[0.3px]">
              <svg class="w-[200px] h-[52px] shrink-0" viewBox="296 170 200 52"><path d="M317 185L320 192.500L328.500 193L322 198.500L324.500 207L317 202.300L309.500 207L312 198.500L305.500 193L314 192.500Z" fill="none" stroke="#e5e5e5" stroke-width="1.500"/><path d="M338.500 174v44M447 174v44" stroke="#999" stroke-width="1.500"/><path d="M354 194.500L366 181V189H374V201H366V208.500Z" fill="#8c8c8c"/><path d="M428 194.500L416 181V189H407V201H416V208.500Z" fill="#8c8c8c"/><use href="#graph" x="461" y="183" width="30" height="26"/></svg>
              <span class="ml-[13px] w-[322px]">BP_SpaceRocks_Gamemode</span>
              <svg class="w-[12px] h-[20px] shrink-0" viewBox="0 0 12 20"><path d="M2 1.500L10 10L2 18.500" fill="none" stroke="#e6e6e6" stroke-width="2.400"/></svg>
              <span class="ml-[11px] mt-[-4px] w-[485px] shrink-0">Event Graph</span>
              <span class="w-[96px] mt-[-6px] shrink-0 text-[25px] tracking-[0] font-bold text-[#454545] origin-left scale-x-[.93]">Zoom -3</span>
            </div>

            <div class="absolute left-[1054px] top-[736px] text-[82px] leading-[96px] tracking-[0] font-bold text-white/18 origin-left scale-x-[.853]">BLUEPRINT</div>

            <!-- Highlights -->
            <div class="absolute left-[312px] top-[416px] w-[117px] h-[43px] rounded-[20px] border-[6px] border-[#ffff00]"></div>
            <div class="absolute left-[876px] top-[482px] w-[46px] h-[52px] rounded-[50%] border-[7px] border-[#ffff00]"></div>
            <div class="absolute left-[1043px] top-[459px] w-[182px] h-[88px] rounded-[28px] border-[7px] border-[#ffff00]"></div>
          </div>
        </div>
      </div>

      <!-- Results -->
      <div class="mt-[6px] h-[27px] shrink-0 flex gap-[2px] pl-[5px] text-shadow-[1px_1px_0_#000]">
        <div class="w-[187px] pb-0.5 rounded-t-sm bg-[#606060] flex items-center"><svg class="ml-2 w-[18px] h-[20px]" viewBox="0 0 18 20"><path d="M2 0H17V16L15 19L0 18Z" fill="url(#pale)"/><path d="M4 5L10 9.500L4 14" fill="none" stroke="#2a3d6b" stroke-width="2.200"/><path d="M10 15.500h6" stroke="#2a3d6b" stroke-width="2"/></svg><span class="ml-[9px] w-[132px]">Compiler Results</span><svg class="w-2 h-2"><use href="#x"/></svg></div>
        <div class="w-[187px] pb-0.5 rounded-t-sm bg-[#3f3f3f] flex items-center"><svg class="ml-2 w-[20px] h-[20px]" viewBox="0 0 20 20"><ellipse cx="13" cy="17" rx="6" ry="2" fill="#222"/><path d="M6 13L2 18" stroke="#7b8fd0" stroke-width="3" stroke-linecap="round"/><circle cx="11.500" cy="8" r="7.500" fill="#8ea0d8"/><circle cx="11.500" cy="8" r="6" fill="url(#ball)"/></svg><span class="ml-[7px] w-[132px]">Find Results</span><svg class="w-2 h-2"><use href="#x"/></svg></div>
      </div>
      <div class="flex-1 bg-[#606060] pt-[2px] pl-[2px] pr-[3px]">
        <div class="h-full rounded-t bg-[#3e3e3e] pt-[5px] px-[5px]">
          <div class="h-[96px] rounded-xs bg-[#222] text-[#8b8b8b] pt-[6px] flex items-start"><span class="ml-[12px] mt-[6px] w-[5px] h-[5px] rounded-full bg-[#6db3ea]"></span><span class="ml-[16px] tracking-[-0.27px]">[1718.92] Compile of BP_SpaceRocks_Gamemode successful! [in 160 ms] (/Game/Blueprints/BP_SpaceRocks_Gamemode.BP_SpaceRocks_Gamemode)</span></div>
          <div class="text-right pr-[7px] mt-[11px] text-[#d8d8d8]">Clear</div>
        </div>
      </div>
    </main>
    <div class="ml-[6px] mt-[28px] w-px bg-[#5a5a5a]"></div>
  </div>
</div>
</body>
</html>
